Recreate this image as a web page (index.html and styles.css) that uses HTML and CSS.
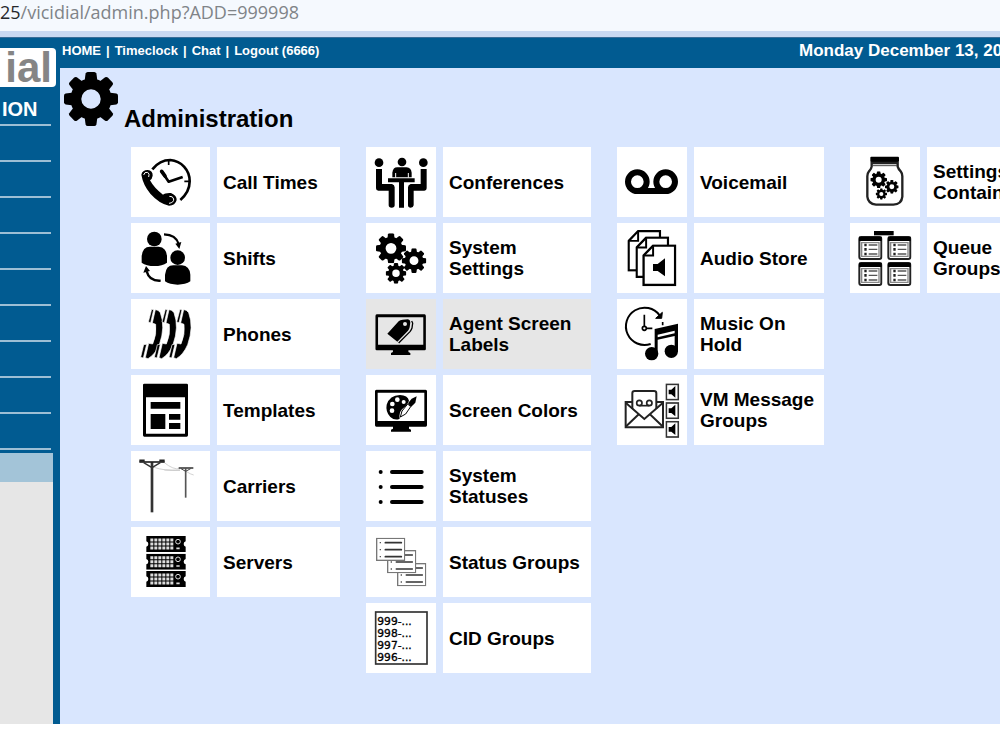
FILE: index.html
```html
<!DOCTYPE html>
<html lang="en">
<head>
<meta charset="utf-8">
<title>Administration</title>
<link rel="stylesheet" href="styles.css">
</head>
<body>
<svg class="defs" aria-hidden="true">
  <symbol id="gear" viewBox="-50 -50 100 100">
    <circle r="28" fill="none" stroke="#000" stroke-width="20"/>
    <g id="teeth">
      <path id="tooth" d="M-12-32L-10-47Q-9-50-6-50H6Q9-50 10-47L12-32Z"/>
      <use href="#tooth" transform="rotate(45)"/><use href="#tooth" transform="rotate(90)"/><use href="#tooth" transform="rotate(135)"/>
      <use href="#tooth" transform="rotate(180)"/><use href="#tooth" transform="rotate(225)"/><use href="#tooth" transform="rotate(270)"/><use href="#tooth" transform="rotate(315)"/>
    </g>
  </symbol>
  <symbol id="handset" viewBox="0 0 75 152" overflow="visible">
    <path d="M30 2L20 40L27 42L36 3ZM41 3L32 43L42 47Q46 78 33 106L21 104L11 147L19 150Q40 138 53 108Q72 55 56 12Q49 2 41 3ZM6 108L-3 146L5 148L15 107Z" stroke="#fff" stroke-width="2"/>
  </symbol>
  <symbol id="server" viewBox="0 0 122 48">
    <path d="M2 0H120V16Q114 18 114 24T120 32V48H2V32Q8 30 8 24T2 16Z"/>
    <path d="M14 12H86M14 24H86M14 36H86" stroke="#ddd" stroke-width="9" stroke-dasharray="9 3"/>
    <circle cx="97" cy="17" r="7" fill="none" stroke="#ddd" stroke-width="3"/>
    <path d="M92 37H102" stroke="#ddd" stroke-width="5"/>
  </symbol>
  <symbol id="list" viewBox="0 0 88 70">
    <rect x="2" y="2" width="84" height="66" fill="#fff" stroke="#777" stroke-width="4"/>
    <path d="M28 15H76M28 36H76M28 57H76" stroke="#333" stroke-width="5" stroke-linecap="round"/>
    <path d="M11 15H15M11 36H15M11 57H15" stroke="#555" stroke-width="4"/>
  </symbol>
  <symbol id="page" viewBox="0 0 104 128">
    <path d="M33 4H100V124H4V34Z" fill="#fff" stroke="#000" stroke-width="7"/>
    <path d="M33 6V34H6" fill="none" stroke="#000" stroke-width="6"/>
  </symbol>
  <symbol id="speaker" viewBox="0 0 42 52">
    <rect x="3" y="3" width="36" height="46" fill="#fff" stroke="#333" stroke-width="5"/>
    <path d="M10 19H18L30 8V43L18 33H10Z"/>
  </symbol>
  <symbol id="queue" viewBox="0 0 72 72">
    <rect x="3" y="3" width="66" height="66" rx="6" fill="#fff" stroke="#222" stroke-width="6"/>
    <path d="M2 2H70V15H2Z"/>
    <path d="M10 20H62V61H10Z" fill="none" stroke="#888" stroke-width="4"/>
    <path d="M18 27H25M18 40H25M18 54H25" stroke="#222" stroke-width="8"/>
    <path d="M31 27H57M31 40H57M31 54H57" stroke="#555" stroke-width="4"/>
  </symbol>
  <symbol id="monitor" viewBox="0 0 160 130">
    <path fill-rule="evenodd" d="M6 1H154Q158 1 158 6V108Q158 112 154 112H104V118L110 121V127H50V121L56 118V112H6Q2 112 2 108V6Q2 1 6 1ZM10 10V95H150V10Z"/>
  </symbol>
</svg>

<div class="address"><span class="address-host">25</span>/vicidial/admin.php?ADD=999998</div>

<div class="app">
  <aside class="sidebar">
    <div class="logo">ial</div>
    <h2 class="side-title">ION</h2>
    <ul class="side-nav"><li></li><li></li><li></li><li></li><li></li><li></li><li></li><li></li><li></li></ul>
    <div class="side-active"></div>
    <div class="side-rest"></div>
  </aside>

  <div class="content">
    <header class="topbar">
      <nav class="toplinks"><a href="#">HOME</a><span>|</span><a href="#">Timeclock</a><span>|</span><a href="#">Chat</a><span>|</span><a href="#">Logout (6666)</a></nav>
      <div class="date">Monday December 13, 2021</div>
    </header>

    <main class="main">
      <div class="heading">
        <svg class="heading-icon"><use href="#gear"/></svg>
        <h1>Administration</h1>
      </div>

      <div class="columns">
        <div class="column column-a">
          <a class="tile" href="#"><span class="pic"><svg viewBox="42 45 162 162">
            <path d="M82 88Q104 60 136 60A63 63 0 0 1 194 124Q194 156 166 180" fill="none" stroke="#000" stroke-width="8"/>
            <path d="M131 60V75M178 124H193" stroke="#000" stroke-width="5"/>
            <path d="M110 94L131 125L173 111" fill="none" stroke="#000" stroke-width="8" stroke-linejoin="round"/>
            <path d="M110 94L120 108" stroke="#000" stroke-width="11" stroke-linecap="round"/>
            <path d="M49 104Q52 90 68 90Q84 92 83 107Q81 118 75 121Q88 145 114 164Q120 158 138 159Q156 167 155 180Q151 197 132 197Q103 191 76 161Q54 134 49 104Z"/>
            <path d="M56 105Q58 95 68 97Q75 101 71 111M132 190Q147 188 146 177Q144 168 133 169" fill="none" stroke="#fff" stroke-width="3"/>
          </svg></span><span class="label">Call Times</span></a>
          <a class="tile" href="#"><span class="pic"><svg viewBox="42 273 162 162">
            <circle cx="88" cy="297" r="22"/><path d="M50 368V348Q53 320 75 320H101Q124 322 126 348V368Q112 378 88 378T50 368Z"/>
            <circle cx="158" cy="353" r="22"/><path d="M120 424V404Q123 376 145 376H171Q194 378 196 404V424Q182 434 158 434T120 424Z"/>
            <path d="M117 283Q153 284 161 312M107 422Q73 424 65 394" fill="none" stroke="#000" stroke-width="7"/>
            <path d="M151 311L169 306L163 327ZM55 398L63 378L75 393Z"/>
          </svg></span><span class="label">Shifts</span></a>
          <a class="tile" href="#"><span class="pic"><svg viewBox="42 37 162 162">
            <use href="#handset" x="50" y="42" width="75" height="152"/><use href="#handset" x="91" y="42" width="75" height="152"/><use href="#handset" x="135" y="42" width="75" height="152"/>
          </svg></span><span class="label">Phones</span></a>
          <a class="tile" href="#"><span class="pic"><svg viewBox="42 265 162 162">
            <path fill-rule="evenodd" d="M58 267H185Q189 267 189 271V422Q189 426 185 426H58Q54 426 54 422V271Q54 267 58 267ZM63 308V417H180V308Z"/>
            <path d="M77 322H166V342H77ZM77 358H121V403H77ZM132 358H166V375H132ZM132 385H166V403H132Z"/>
          </svg></span><span class="label">Templates</span></a>
          <a class="tile" href="#"><span class="pic"><svg viewBox="42 39 162 162">
            <path d="M118 50Q145 72 165 68M84 63Q120 76 165 72M118 72L165 73M185 77Q197 85 206 87" fill="none" stroke="#bbb" stroke-width="2"/>
            <path d="M81 48V199" stroke="#333" stroke-width="8"/><path d="M43 48H119" stroke="#222" stroke-width="5"/>
            <path d="M43 44H59M103 44H119" stroke="#222" stroke-width="7"/><path d="M56 50L81 65L106 50" fill="none" stroke="#333" stroke-width="4"/>
            <path d="M182 67V155" stroke="#555" stroke-width="5"/><path d="M161 66H205" stroke="#444" stroke-width="5"/><path d="M168 68L182 76L197 68" fill="none" stroke="#444" stroke-width="3"/>
          </svg></span><span class="label">Carriers</span></a>
          <a class="tile" href="#"><span class="pic"><svg viewBox="42 267 162 162">
            <use href="#server" x="62" y="270" width="122" height="48"/><use href="#server" x="62" y="323" width="122" height="48"/><use href="#server" x="62" y="375" width="122" height="48"/>
          </svg></span><span class="label">Servers</span></a>
        </div>

        <div class="column column-b">
          <a class="tile" href="#"><span class="pic"><svg viewBox="42 45 162 162">
            <circle cx="57" cy="68" r="13"/><circle cx="126" cy="66" r="13"/><circle cx="190" cy="68" r="13"/>
            <path d="M48 87H66V132H96Q104 134 104 142V196Q104 203 95 203T86 196V152H55Q48 152 48 145ZM200 87H182V132H152Q144 134 144 142V196Q144 203 152 203T161 196V152H193Q200 152 200 145Z"/>
            <path d="M84 115H164V127H132V203H117V127H84Z"/>
            <path d="M97 112V98Q99 82 112 82H140Q153 83 155 98V112Z"/>
            <path d="M107 113V99M145 113V99" stroke="#fff" stroke-width="3"/>
          </svg></span><span class="label">Conferences</span></a>
          <a class="tile" href="#"><span class="pic"><svg viewBox="42 273 162 162">
            <use href="#gear" x="48" y="280" width="90" height="90"/><use href="#gear" x="125" y="325" width="74" height="74"/><use href="#gear" x="77" y="369" width="62" height="62"/>
          </svg></span><span class="label">System Settings</span></a>
          <a class="tile tile-current" href="#"><span class="pic"><svg viewBox="42 37 162 162">
            <use href="#monitor" x="44" y="58" width="156" height="126"/>
            <path fill-rule="evenodd" d="M82 117L116 80Q120 75 128 75L144 74Q151 75 151 83L149 98Q148 103 144 108L112 141ZM135 82A6 6 0 1 0 135 94A6 6 0 1 0 135 82Z"/>
            <path d="M155 79L158 85L156 100Q154 106 150 111L116 145" fill="none" stroke="#000" stroke-width="4"/>
          </svg></span><span class="label">Agent Screen Labels</span></a>
          <a class="tile" href="#"><span class="pic"><svg viewBox="42 265 162 162">
            <use href="#monitor" x="43" y="284" width="160" height="130"/>
            <path d="M120 301Q143 302 147 318Q143 330 126 344Q116 355 119 372Q105 379 91 367Q76 351 80 330Q89 302 120 301Z"/>
            <g fill="#fff"><circle cx="112" cy="315" r="7"/><circle cx="131" cy="322" r="6"/><circle cx="97" cy="328" r="7"/><circle cx="96" cy="348" r="7"/></g>
            <path d="M170 305L166 324L153 337L144 326L155 312Z"/>
            <path d="M143 328L152 336L137 358L121 367L126 349Z" fill="#fff" stroke="#000" stroke-width="3"/>
          </svg></span><span class="label">Screen Colors</span></a>
          <a class="tile" href="#"><span class="pic"><svg viewBox="42 39 162 162">
            <path d="M96 78H185M96 123H185M96 168H185" stroke="#000" stroke-width="12" stroke-linecap="round"/>
            <circle cx="62" cy="78" r="6"/><circle cx="62" cy="123" r="6"/><circle cx="62" cy="168" r="6"/>
          </svg></span><span class="label">System Statuses</span></a>
          <a class="tile" href="#"><span class="pic"><svg viewBox="42 267 162 162">
            <use href="#list" x="111" y="351" width="88" height="70"/><use href="#list" x="81" y="312" width="88" height="70"/><use href="#list" x="48" y="275" width="88" height="70"/>
          </svg></span><span class="label">Status Groups</span></a>
          <a class="tile" href="#"><span class="pic"><svg viewBox="42 495 162 162">
            <rect x="47" y="498" width="154" height="156" fill="#fff" stroke="#333" stroke-width="5"/>
            <g class="cid"><text x="52" y="536">999-...</text><text x="52" y="572">998-...</text><text x="52" y="608">997-...</text><text x="52" y="644">996-...</text></g>
          </svg></span><span class="label">CID Groups</span></a>
        </div>

        <div class="column column-c">
          <a class="tile" href="#"><span class="pic"><svg viewBox="41 45 162 162">
            <g fill="none" stroke="#000" stroke-width="18"><circle cx="78" cy="125" r="28"/><circle cx="163" cy="125" r="28"/><path d="M78 153H163"/></g>
          </svg></span><span class="label">Voicemail</span></a>
          <a class="tile" href="#"><span class="pic"><svg viewBox="41 273 162 162">
            <use href="#page" x="48" y="269" width="102" height="126"/><use href="#page" x="72" y="289" width="102" height="126"/><use href="#page" x="92" y="313" width="104" height="126"/>
            <path d="M125 372H139L161 355V409L139 393H125Z"/>
          </svg></span><span class="label">Audio Store</span></a>
          <a class="tile" href="#"><span class="pic"><svg viewBox="41 37 162 162">
            <path d="M145 62A56 56 0 1 0 118 148" fill="none" stroke="#000" stroke-width="6"/>
            <path d="M133 71H151L153 53Z" stroke="#000" stroke-width="3"/>
            <path d="M99 60V101H123M154 82V92" fill="none" stroke="#000" stroke-width="5"/><circle cx="99" cy="101" r="6" fill="#fff" stroke="#000" stroke-width="5"/>
            <circle cx="121" cy="177" r="20"/><circle cx="180" cy="170" r="20"/>
            <path fill-rule="evenodd" d="M130 103L200 87V170H190V124L139 135V178H130ZM139 120V128L190 116V108Z"/>
          </svg></span><span class="label">Music On Hold</span></a>
          <a class="tile" href="#"><span class="pic"><svg viewBox="41 265 162 162">
            <g fill="none" stroke="#222" stroke-width="6"><path d="M62 322H43V398H155V322H136"/><path d="M43 324L99 373L155 324M43 396L83 358M155 396L115 358"/><path d="M63 342V296Q63 289 70 289H128Q135 289 135 296V342"/>
            <circle cx="84" cy="325" r="8" stroke-width="5"/><circle cx="114" cy="325" r="8" stroke-width="5"/><path d="M84 333H114" stroke-width="5"/></g>
            <use href="#speaker" x="162" y="266" width="42" height="52"/><use href="#speaker" x="162" y="322" width="42" height="52"/><use href="#speaker" x="162" y="378" width="42" height="52"/>
          </svg></span><span class="label">VM Message Groups</span></a>
        </div>

        <div class="column column-d">
          <a class="tile" href="#"><span class="pic"><svg viewBox="234 465 162 162">
            <rect x="271" y="470" width="86" height="16" rx="3"/>
            <path d="M275 489H353V500Q355 507 362 514Q367 520 367 529V590Q365 613 340 614H288Q264 612 262 590V529Q262 520 267 514Q274 507 275 500Z" fill="#fff" stroke="#222" stroke-width="7"/><path d="M277 497H351" stroke="#444" stroke-width="3"/>
            <use href="#gear" x="271" y="514" width="50" height="50"/><use href="#gear" x="315" y="540" width="41" height="41"/><use href="#gear" x="287" y="565" width="34" height="34"/>
          </svg></span><span class="label">Settings Containers</span></a>
          <a class="tile" href="#"><span class="pic"><svg viewBox="234 693 162 162">
            <rect x="282" y="693" width="59" height="13"/>
            <use href="#queue" x="234" y="708" width="74" height="72"/><use href="#queue" x="321" y="708" width="74" height="72"/><use href="#queue" x="234" y="786" width="74" height="72"/><use href="#queue" x="321" y="786" width="74" height="72"/>
          </svg></span><span class="label">Queue Groups</span></a>
        </div>
      </div>
    </main>
  </div>
</div>
</body>
</html>
```
FILE: styles.css
```css
* { box-sizing: border-box; }

body {
  margin: 0;
  background: #fff;
  color: #000;
  font-family: "Liberation Sans", Arial, sans-serif;
  overflow-x: hidden;
}

a { color: inherit; text-decoration: none; }

.defs { display: block; width: 0; height: 0; }

.address {
  height: 37px;
  background: #f5f9fe;
  border-bottom: 6px solid #c9d9f2;
  color: #808488;
  font-family: "Open Sans", "Noto Sans", sans-serif;
  font-size: 18px;
  line-height: 25px;
  white-space: nowrap;
}

.address-host { color: #25282c; }

.app {
  display: flex;
  overflow: hidden;
  background: #015b91;
  border-top: 1px solid #3a6d98;
}

.sidebar {
  display: flex;
  flex: 0 0 60px;
  flex-direction: column;
  padding-top: 10px;
}

.logo {
  width: 56px;
  height: 39px;
  padding-right: 4px;
  border-radius: 0 4px 4px 0;
  background: #fff;
  color: #858585;
  font-size: 42px;
  font-weight: bold;
  line-height: 40px;
  text-align: right;
}

.side-title {
  width: 51px;
  height: 39px;
  margin: 0;
  padding-left: 2px;
  border-bottom: 2px solid #9dbfd5;
  color: #fff;
  font-size: 20px;
  line-height: 44px;
}

.side-nav { width: 51px; margin: 0; padding: 0; list-style: none; }
.side-nav li { height: 36px; border-bottom: 2px solid #9dbfd5; }

.side-active { width: 53px; height: 29px; margin-top: 3px; background: #a3c4d8; }
.side-rest { flex: 1; width: 53px; background: #e6e6e6; }

.content { flex: 1; min-width: 0; background: #d9e6fe; }

.topbar {
  display: flex;
  justify-content: space-between;
  height: 30px;
  padding-left: 2px;
  background: #015b91;
  color: #fff;
  font-weight: bold;
  line-height: 26px;
  white-space: nowrap;
}

.toplinks { font-size: 13px; }
.toplinks span { margin: 0 5px; }

.date { flex: 0 0 201px; min-width: 0; font-size: 17px; }

.main { padding: 4px 0 51px 4px; }

.heading { display: flex; align-items: flex-end; gap: 6px; }
.heading-icon { width: 54px; height: 54px; }
.heading h1 { margin: 0; font-size: 24px; line-height: 14px; }

.columns {
  display: flex;
  align-items: flex-start;
  gap: 26px;
  margin: 21px 0 0 67px;
}

.column { display: grid; flex: none; gap: 6px; }
.tile { display: grid; gap: 7px; height: 70px; }
.column-a .tile { grid-template-columns: 79px 123px; }
.column-b .tile { grid-template-columns: 70px 148px; }
.column-c .tile { grid-template-columns: 70px 130px; }
.column-d .tile { grid-template-columns: 70px 123px; }

.pic, .label { display: flex; align-items: center; background: #fff; }
.pic { padding-left: 8px; }
.pic svg { width: 54px; height: 54px; overflow: visible; }

.label {
  padding-left: 6px;
  font-size: 19px;
  font-weight: bold;
  line-height: 21px;
}

.tile-current .pic, .tile-current .label { background: #e6e6e6; }

.cid { font-family: "DejaVu Sans", sans-serif; font-size: 32px; stroke: #000; stroke-width: 1px; }
```
